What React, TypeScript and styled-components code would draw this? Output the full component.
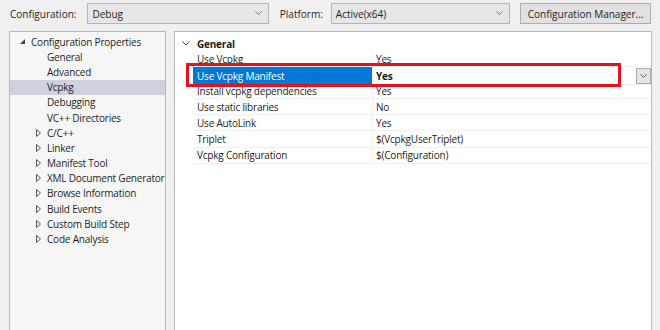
import React from "react";
import styled, { createGlobalStyle } from "styled-components";

const GlobalStyle = createGlobalStyle`
  html, body { margin: 0; padding: 0; }
  body {
    background: #f0f0f0;
    font-family: "Open Sans", "Noto Sans", sans-serif;
    font-size: 10px;
    color: #1e1e1e;
    width: 660px;
    height: 330px;
    overflow: hidden;
  }
`;

const Page = styled.div`
  width: 660px;
  height: 330px;
  display: flex;
  flex-direction: column;
  position: relative;
`;

const TopBar = styled.div`
  display: flex;
  align-items: center;
  height: 27px;
  padding: 0 9px 0 10px;
`;

const Label = styled.span<{ $gap: number }>`
  margin-right: ${(p) => p.$gap}px;
  white-space: nowrap;
`;

const Select = styled.div<{ $w: number; $after: number }>`
  width: ${(p) => p.$w}px;
  height: 21px;
  box-sizing: border-box;
  border: 1px solid #b4b4b4;
  background: #e6e6e6;
  display: flex;
  align-items: center;
  padding: 0 6px 0 4px;
  margin-right: ${(p) => p.$after}px;
  justify-content: space-between;
`;

const Button = styled.div`
  width: 132px;
  height: 21px;
  box-sizing: border-box;
  border: 1px solid #adadad;
  background: #e1e1e1;
  display: flex;
  align-items: center;
  justify-content: center;
`;

const Chevron = ({ size = 7, color = "#606060" }: { size?: number; color?: string }) => (
  <svg width={size} height={size * 0.6} viewBox="0 0 10 6">
    <path d="M0.5 0.5 L5 5 L9.5 0.5" fill="none" stroke={color} strokeWidth="1.1" />
  </svg>
);

const Main = styled.div`
  flex: 1;
  display: flex;
  padding: 4px 8px 0 9px;
  gap: 8px;
  min-height: 0;
  letter-spacing: -0.2px;
`;

const TreePanel = styled.div`
  width: 157px;
  flex-shrink: 0;
  box-sizing: border-box;
  border: 1px solid #b9b9b9;
  border-bottom: none;
  background: #f6f6f6;
  padding-top: 2px;
  overflow: hidden;
`;

const TreeRow = styled.div<{ $selected?: boolean; $indent: number }>`
  height: 15.2px;
  display: flex;
  align-items: center;
  padding-left: ${(p) => p.$indent}px;
  background: ${(p) => (p.$selected ? "#cfd1dd" : "transparent")};
  white-space: nowrap;
`;

const ArrowSlot = styled.span`
  width: 11px;
  flex-shrink: 0;
  display: inline-flex;
  align-items: center;
`;

const GridPanel = styled.div`
  flex: 1;
  box-sizing: border-box;
  border: 1px solid #b9b9b9;
  border-bottom: none;
  background: #ffffff;
  padding-top: 4px;
`;

const CategoryRow = styled.div`
  height: 15px;
  display: flex;
  align-items: center;
  padding-left: 7px;
  font-weight: 700;
`;

const CategoryIcon = styled.span`
  width: 15px;
  display: inline-flex;
  align-items: center;
`;

const PropRow = styled.div`
  height: 16.1px;
  display: grid;
  grid-template-columns: 18px 180px 1fr;
  box-sizing: border-box;
`;

const Margin = styled.div``;

const NameCell = styled.div<{ $selected?: boolean }>`
  display: flex;
  align-items: center;
  padding-left: 4px;
  background: ${(p) => (p.$selected ? "#0078d7" : "transparent")};
  color: ${(p) => (p.$selected ? "#ffffff" : "#1e1e1e")};
  border-bottom: 1px solid #f0f0f0;
  border-right: 1px solid #f0f0f0;
  white-space: nowrap;
`;

const ValueCell = styled.div<{ $bold?: boolean }>`
  display: flex;
  align-items: center;
  padding-left: 3px;
  font-weight: ${(p) => (p.$bold ? 700 : 400)};
  border-bottom: 1px solid #f0f0f0;
  white-space: nowrap;
`;

const DropButton = styled.div`
  margin-left: auto;
  width: 15px;
  height: 16px;
  box-sizing: border-box;
  border: 1px solid #acacac;
  background: #e5e5e5;
  display: flex;
  align-items: center;
  justify-content: center;
  align-self: flex-start;
  margin-top: 1px;
`;

const Highlight = styled.div`
  position: absolute;
  left: 186px;
  top: 63px;
  width: 435px;
  height: 24px;
  box-sizing: border-box;
  border: 3px solid #e3121d;
  pointer-events: none;
`;

const FilledArrow = () => (
  <svg width="5" height="5" viewBox="0 0 5 5">
    <path d="M5 0 L5 5 L0 5 Z" fill="#404040" />
  </svg>
);

const OpenArrow = () => (
  <svg width="5" height="8" viewBox="0 0 5 8">
    <path d="M0.5 0.5 L4.5 4 L0.5 7.5 Z" fill="none" stroke="#555" strokeWidth="1" />
  </svg>
);

type TreeItem = { label: string; level: 0 | 1; arrow?: "open" | "closed"; selected?: boolean };

const treeItems: TreeItem[] = [
  { label: "Configuration Properties", level: 0, arrow: "open" },
  { label: "General", level: 1 },
  { label: "Advanced", level: 1 },
  { label: "Vcpkg", level: 1, selected: true },
  { label: "Debugging", level: 1 },
  { label: "VC++ Directories", level: 1 },
  { label: "C/C++", level: 1, arrow: "closed" },
  { label: "Linker", level: 1, arrow: "closed" },
  { label: "Manifest Tool", level: 1, arrow: "closed" },
  { label: "XML Document Generator", level: 1, arrow: "closed" },
  { label: "Browse Information", level: 1, arrow: "closed" },
  { label: "Build Events", level: 1, arrow: "closed" },
  { label: "Custom Build Step", level: 1, arrow: "closed" },
  { label: "Code Analysis", level: 1, arrow: "closed" },
];

type Prop = { name: string; value: string; selected?: boolean };

const props: Prop[] = [
  { name: "Use Vcpkg", value: "Yes" },
  { name: "Use Vcpkg Manifest", value: "Yes", selected: true },
  { name: "Install vcpkg dependencies", value: "Yes" },
  { name: "Use static libraries", value: "No" },
  { name: "Use AutoLink", value: "Yes" },
  { name: "Triplet", value: "$(VcpkgUserTriplet)" },
  { name: "Vcpkg Configuration", value: "$(Configuration)" },
];

export default function App() {
  return (
    <Page>
      <GlobalStyle />
      <TopBar>
        <Label $gap={11}>Configuration:</Label>
        <Select $w={183} $after={11}>
          <span>Debug</span>
          <Chevron />
        </Select>
        <Label $gap={8}>Platform:</Label>
        <Select $w={181} $after={10}>
          <span>Active(x64)</span>
          <Chevron />
        </Select>
        <Button>Configuration Manager...</Button>
      </TopBar>
      <Main>
        <TreePanel>
          {treeItems.map((t) => (
            <TreeRow key={t.label} $indent={t.level === 0 ? 10 : 26} $selected={t.selected}>
              <ArrowSlot>
                {t.arrow === "open" && <FilledArrow />}
                {t.arrow === "closed" && <OpenArrow />}
              </ArrowSlot>
              {t.label}
            </TreeRow>
          ))}
        </TreePanel>
        <GridPanel>
          <CategoryRow>
            <CategoryIcon>
              <Chevron size={8} color="#333" />
            </CategoryIcon>
            General
          </CategoryRow>
          {props.map((p) => (
            <PropRow key={p.name}>
              <Margin />
              <NameCell $selected={p.selected}>{p.name}</NameCell>
              <ValueCell $bold={p.selected}>
                {p.value}
                {p.selected && (
                  <DropButton>
                    <Chevron size={7} color="#404040" />
                  </DropButton>
                )}
              </ValueCell>
            </PropRow>
          ))}
        </GridPanel>
      </Main>
      <Highlight />
    </Page>
  );
}
